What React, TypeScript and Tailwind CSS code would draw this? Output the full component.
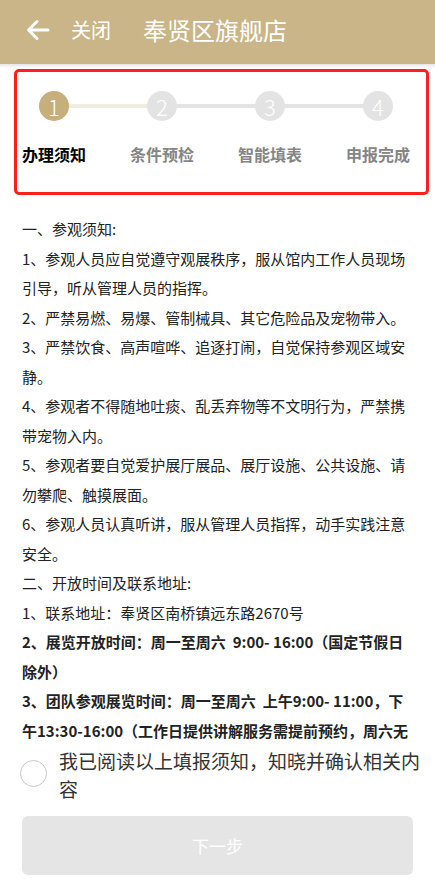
import React from "react";

const steps = ["办理须知", "条件预检", "智能填表", "申报完成"];

export default function App() {
  const font = { fontFamily: '"Noto Sans CJK SC", "Noto Sans", sans-serif' };
  return (
    <div className="relative w-[435px] h-[879px] overflow-hidden bg-white" style={font}>
      {/* header */}
      <div className="h-[64px] bg-[#C9B588] flex items-center text-white">
        <svg className="ml-[26px] mt-[-4px]" width="24" height="22" viewBox="0 0 24 22" fill="none">
          <path d="M22 11H3M11 2.5L2.5 11L11 19.5" stroke="white" strokeWidth="3" strokeLinecap="round" strokeLinejoin="round" />
        </svg>
        <span className="ml-[21px] mt-[-4px] text-[20px] leading-none">关闭</span>
        <span className="ml-[32px] mt-[-4px] text-[24px] leading-none">奉贤区旗舰店</span>
      </div>
      <div className="h-[4px] bg-gradient-to-b from-[#e6e6e6] to-white" />

      {/* steps */}
      <div className="relative h-[133px]">
        <div className="grid grid-cols-4 w-[432px] pt-[23px]">
          {steps.map((s, i) => (
            <div key={s} className="relative flex flex-col items-center">
              {i > 0 && (
                <div
                  className={`absolute top-[13px] right-1/2 w-[108px] h-[4px] ${i === 1 ? "bg-[#F1ECE0]" : "bg-[#E3E3E3]"}`}
                />
              )}
              <div
                className={`relative z-10 w-[30px] h-[30px] rounded-full flex items-center justify-center text-white text-[22px] font-light leading-none ${i === 0 ? "bg-[#C6AE7D]" : "bg-[#E3E3E3]"}`}
              >
                {i + 1}
              </div>
              <div
                className={`mt-[22px] text-[16px] leading-[22px] ${i === 0 ? "text-black font-bold" : "text-[#858585] font-semibold"}`}
              >
                {s}
              </div>
            </div>
          ))}
        </div>
        <div className="absolute left-[14px] top-[1px] w-[415px] h-[126px] border-[3px] border-[#FF1E1E] rounded-[5px]" />
      </div>

      {/* notice text */}
      <div className="h-[545px] overflow-hidden px-[22px] pt-[13px] text-[15px] leading-[29.5px] text-[#222]">
        <p>一、参观须知:</p>
        <p>1、参观人员应自觉遵守观展秩序，服从馆内工作人员现场引导，听从管理人员的指挥。</p>
        <p>2、严禁易燃、易爆、管制械具、其它危险品及宠物带入。</p>
        <p>3、严禁饮食、高声喧哗、追逐打闹，自觉保持参观区域安静。</p>
        <p>4、参观者不得随地吐痰、乱丢弃物等不文明行为，严禁携带宠物入内。</p>
        <p>5、参观者要自觉爱护展厅展品、展厅设施、公共设施、请勿攀爬、触摸展面。</p>
        <p>6、参观人员认真听讲，服从管理人员指挥，动手实践注意安全。</p>
        <p>二、开放时间及联系地址:</p>
        <p>1、联系地址：奉贤区南桥镇远东路2670号</p>
        <p className="font-bold">2、展览开放时间：周一至周六&nbsp;&nbsp;9:00- 16:00（国定节假日除外）</p>
        <p className="font-bold">3、团队参观展览时间：周一至周六&nbsp;&nbsp;上午9:00- 11:00，下午13:30-16:00（工作日提供讲解服务需提前预约，周六无讲解）</p>
      </div>

      {/* agree */}
      <div className="flex items-start pl-[20px] pt-[1px]">
        <div className="mt-[13px] w-[27px] h-[27px] rounded-full border-[1.5px] border-[#C8C8C8] shrink-0" />
        <div className="ml-[12px] w-[366px] shrink-0 text-[19px] leading-[28px] text-[#333]">我已阅读以上填报须知，知晓并确认相关内容</div>
      </div>

      {/* button */}
      <div className="px-[22px] mt-[13px]">
        <div className="h-[59px] rounded-[6px] bg-[#E5E5E5] flex items-center justify-center text-white text-[17px]">
          下一步
        </div>
      </div>
    </div>
  );
}
